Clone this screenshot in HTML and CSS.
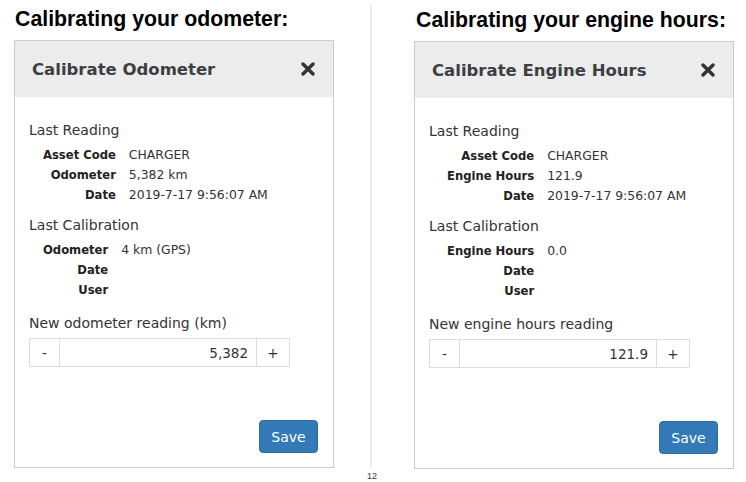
FILE: index.html
```html
<!DOCTYPE html>
<html>
<head>
<meta charset="utf-8">
<link rel="stylesheet" href="styles.css">
</head>
<body>
<div class="page">
  <section class="col">
    <h1 class="heading">Calibrating your odometer:</h1>
    <div class="panel">
      <div class="panel-head">
        <span class="panel-title">Calibrate Odometer</span>
        <svg class="close" width="14" height="14" viewBox="0 0 14 14"><path d="M2 2 L12 12 M12 2 L2 12" stroke="#333" stroke-width="3.4" stroke-linecap="round"/></svg>
      </div>
      <div class="panel-body">
        <div class="sec-title">Last Reading</div>
        <div class="rows">
          <span class="lbl">Asset Code</span><span class="val">CHARGER</span>
          <span class="lbl">Odometer</span><span class="val">5,382 km</span>
          <span class="lbl">Date</span><span class="val">2019-7-17 9:56:07 AM</span>
        </div>
        <div class="sec-title sec-gap">Last Calibration</div>
        <div class="rows">
          <span class="lbl">Odometer</span><span class="val">4 km (GPS)</span>
          <span class="lbl">Date</span><span class="val"></span>
          <span class="lbl">User</span><span class="val"></span>
        </div>
        <div class="sec-title input-label">New odometer reading (km)</div>
        <div class="stepper">
          <span class="step-btn minus">-</span>
          <span class="step-val">5,382</span>
          <span class="step-btn plus">+</span>
        </div>
        <div class="actions"><span class="save">Save</span></div>
      </div>
    </div>
  </section>
  <div class="divider"></div>
  <section class="col col-right">
    <h1 class="heading">Calibrating your engine hours:</h1>
    <div class="panel">
      <div class="panel-head">
        <span class="panel-title">Calibrate Engine Hours</span>
        <svg class="close" width="14" height="14" viewBox="0 0 14 14"><path d="M2 2 L12 12 M12 2 L2 12" stroke="#333" stroke-width="3.4" stroke-linecap="round"/></svg>
      </div>
      <div class="panel-body">
        <div class="sec-title">Last Reading</div>
        <div class="rows rows-wide">
          <span class="lbl">Asset Code</span><span class="val">CHARGER</span>
          <span class="lbl">Engine Hours</span><span class="val">121.9</span>
          <span class="lbl">Date</span><span class="val">2019-7-17 9:56:07 AM</span>
        </div>
        <div class="sec-title sec-gap">Last Calibration</div>
        <div class="rows rows-wide">
          <span class="lbl">Engine Hours</span><span class="val">0.0</span>
          <span class="lbl">Date</span><span class="val"></span>
          <span class="lbl">User</span><span class="val"></span>
        </div>
        <div class="sec-title input-label">New engine hours reading</div>
        <div class="stepper">
          <span class="step-btn minus">-</span>
          <span class="step-val">121.9</span>
          <span class="step-btn plus">+</span>
        </div>
        <div class="actions"><span class="save">Save</span></div>
      </div>
    </div>
  </section>
</div>
<div class="page-num">12</div>
</body>
</html>
```
FILE: styles.css
```css
html, body {
  margin: 0;
  padding: 0;
  background: #fff;
}
body {
  font-family: "DejaVu Sans", Verdana, sans-serif;
  color: #333;
  width: 746px;
  height: 482px;
  overflow: hidden;
}
.page {
  display: flex;
  align-items: flex-start;
  padding-left: 14px;
}
.col {
  width: 320px;
  flex: none;
}
.col-right {
  margin-left: 42px;
  margin-top: 1px;
}
.divider {
  flex: none;
  width: 2px;
  height: 462px;
  margin-top: 5px;
  margin-left: 36px;
  background: #ebebeb;
}
.heading {
  font-family: "Liberation Sans", Arial, sans-serif;
  font-weight: bold;
  font-size: 21.3px;
  line-height: 24px;
  color: #000;
  margin: 0 0 9px 1px;
  padding-top: 7px;
  white-space: nowrap;
}
.col-right .heading {
  margin-left: 2px;
}
.panel {
  border: 1px solid #cccccc;
  background: #fff;
}
.panel-head {
  height: 56px;
  background: #ececec;
  display: flex;
  align-items: center;
  justify-content: space-between;
  padding: 0 18px 0 17px;
}
.panel-title {
  font-weight: bold;
  font-size: 16.5px;
  color: #3c3f43;
}
.close {
  display: block;
}
.panel-body {
  padding: 24px 15px 14px 14px;
}
.sec-title {
  font-size: 14px;
  line-height: 18px;
  color: #333;
}
.sec-gap {
  margin-top: 11px;
}
.rows {
  display: grid;
  grid-template-columns: max-content 1fr;
  column-gap: 13px;
  margin-top: 6px;
  padding-left: 14px;
  font-size: 12.4px;
  line-height: 20px;
}
.rows-wide {
  padding-left: 18px;
}
.lbl {
  font-weight: bold;
  font-size: 11.6px;
  text-align: right;
  color: #222;
}
.val {
  color: #333;
}
.input-label {
  margin-top: 14px;
}
.stepper {
  display: flex;
  width: 261px;
  height: 29px;
  margin-top: 6px;
  border: 1px solid #dcdcdc;
  box-sizing: border-box;
  font-size: 13.5px;
}
.step-btn {
  display: flex;
  align-items: center;
  justify-content: center;
  color: #333;
}
.minus {
  width: 29px;
  border-right: 1px solid #dcdcdc;
}
.plus {
  width: 32px;
  border-left: 1px solid #dcdcdc;
}
.step-val {
  flex: 1;
  display: flex;
  align-items: center;
  justify-content: flex-end;
  padding-right: 8px;
  color: #333;
}
.actions {
  display: flex;
  justify-content: flex-end;
  margin-top: 53px;
}
.save {
  display: flex;
  align-items: center;
  justify-content: center;
  width: 59px;
  height: 33px;
  box-sizing: border-box;
  background: #337ab7;
  border: 1px solid #2e6da4;
  border-radius: 4px;
  color: #fff;
  font-size: 14px;
}
.page-num {
  position: absolute;
  left: 367px;
  top: 471px;
  font-family: "Liberation Sans", Arial, sans-serif;
  font-size: 9px;
  line-height: 10px;
  color: #333;
}
```
